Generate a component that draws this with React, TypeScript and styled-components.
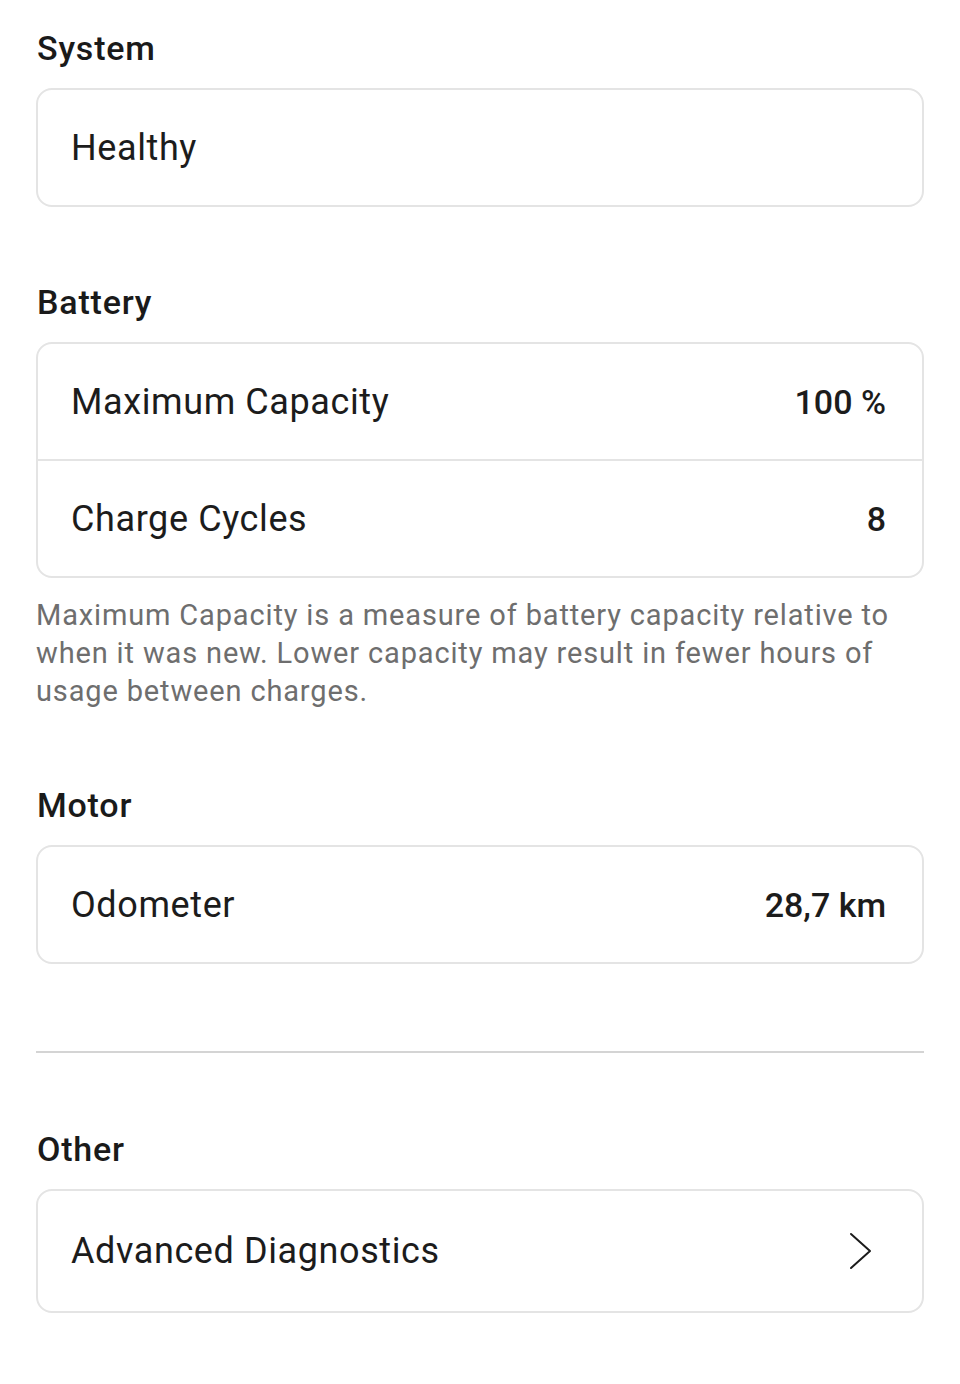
import React from 'react';
import styled, { createGlobalStyle } from 'styled-components';

/// Global
const GlobalStyle = createGlobalStyle`
  body {
    margin: 0;
    background: #ffffff;
    font-family: Roboto, "Noto Sans", sans-serif;
    color: #1c1c1c;
  }
`;

/// Types
interface StatRow {
  label: string;
  value?: string;
  link?: boolean;
}

/// Ui
const Page = styled.div`
  width: 960px;
  box-sizing: border-box;
  padding: 28px 36px 60px;
  display: flex;
  flex-direction: column;
`;

const Section = styled.section<{ $gap: number }>`
  display: flex;
  flex-direction: column;
  margin-bottom: ${ p => p.$gap }px;
`;

const Heading = styled.h2`
  margin: 0 0 20px 1px;
  font-size: 34px;
  line-height: 40px;
  font-weight: 500;
  letter-spacing: 0.8px;
  color: #1a1a1a;
`;

const Card = styled.div`
  border: 2px solid #e4e4e4;
  border-radius: 16px;
  background: #fff;
  overflow: hidden;
`;

const Row = styled.div<{ $tall?: boolean }>`
  display: flex;
  align-items: center;
  justify-content: space-between;
  height: ${ p => p.$tall ? 120 : 115 }px;
  padding: 0 36px 0 33px;
  & + & {
    border-top: 2px solid #e4e4e4;
  }
`;

const Label = styled.span`
  font-size: 36px;
  font-weight: 400;
  letter-spacing: 0.6px;
  color: #1c1c1c;
`;

const Value = styled.span`
  font-size: 34px;
  font-weight: 500;
  color: #1c1c1c;
`;

const Note = styled.p`
  margin: 18px 0 0 0;
  font-size: 29px;
  line-height: 38px;
  letter-spacing: 0.85px;
  color: #6e6e6e;
`;

const Divider = styled.hr`
  margin: 0 0 76px 0;
  border: none;
  border-top: 2px solid #d4d4d4;
`;

const ChevronIcon = styled.svg`
  margin-right: 12px;
  flex-shrink: 0;
`;

const Chevron = () => (
  <ChevronIcon width="26" height="38" viewBox="0 0 26 38" fill="none">
    <path d="M3 2 L22 19 L3 36" stroke="#1c1c1c" strokeWidth="2" strokeLinecap="round" strokeLinejoin="round"/>
  </ChevronIcon>
);

const StatCard = ({ rows, tall }: { rows: StatRow[]; tall?: boolean }) => (
  <Card>
    { rows.map(r => (
      <Row key={ r.label } $tall={ tall }>
        <Label>{ r.label }</Label>
        { r.link ? <Chevron/> : r.value && <Value>{ r.value }</Value> }
      </Row>
    )) }
  </Card>
);

/// App
export default function App() {
  return (
    <Page>
      <GlobalStyle/>
      <Section $gap={ 75 }>
        <Heading>System</Heading>
        <StatCard rows={ [{ label: 'Healthy' }] }/>
      </Section>

      <Section $gap={ 75 }>
        <Heading>Battery</Heading>
        <StatCard rows={ [
          { label: 'Maximum Capacity', value: '100 %' },
          { label: 'Charge Cycles', value: '8' },
        ] }/>
        <Note>
          Maximum Capacity is a measure of battery capacity relative to when it was new. Lower capacity may result in
          fewer hours of usage between charges.
        </Note>
      </Section>

      <Section $gap={ 87 }>
        <Heading>Motor</Heading>
        <StatCard rows={ [{ label: 'Odometer', value: '28,7 km' }] }/>
      </Section>

      <Divider/>

      <Section $gap={ 0 }>
        <Heading>Other</Heading>
        <StatCard tall rows={ [{ label: 'Advanced Diagnostics', link: true }] }/>
      </Section>
    </Page>
  );
}
